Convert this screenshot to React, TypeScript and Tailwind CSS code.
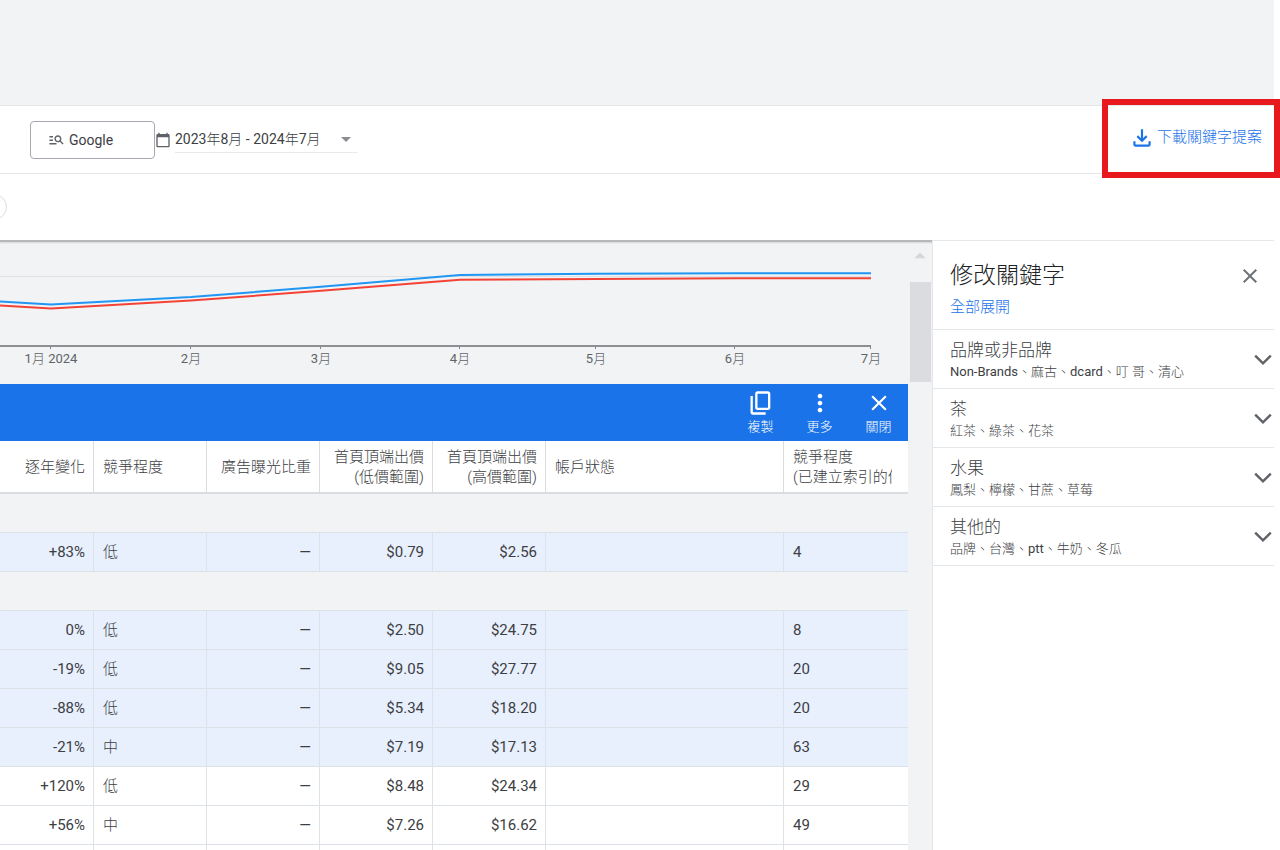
import { clsx } from "clsx";
import {
    MdArrowDropDown,
    MdArrowDropUp,
    MdCalendarToday,
    MdClose,
    MdManageSearch,
    MdMoreVert
} from "react-icons/md";

interface KeywordRow {
    change: string;
    competition: string;
    low: string;
    high: string;
    index: number;
    selected: boolean;
}

const providedRows: KeywordRow[] = [
    { change: "+83%", competition: "低", low: "$0.79", high: "$2.56", index: 4, selected: true }
];

const ideaRows: KeywordRow[] = [
    { change: "0%", competition: "低", low: "$2.50", high: "$24.75", index: 8, selected: true },
    { change: "-19%", competition: "低", low: "$9.05", high: "$27.77", index: 20, selected: true },
    { change: "-88%", competition: "低", low: "$5.34", high: "$18.20", index: 20, selected: true },
    { change: "-21%", competition: "中", low: "$7.19", high: "$17.13", index: 63, selected: true },
    { change: "+120%", competition: "低", low: "$8.48", high: "$24.34", index: 29, selected: false },
    { change: "+56%", competition: "中", low: "$7.26", high: "$16.62", index: 49, selected: false }
];

const groups = [
    { title: "品牌或非品牌", items: "Non-Brands、麻古、dcard、叮 哥、清心" },
    { title: "茶", items: "紅茶、綠茶、花茶" },
    { title: "水果", items: "鳳梨、檸檬、甘蔗、草莓" },
    { title: "其他的", items: "品牌、台灣、ptt、牛奶、冬瓜" }
];

const months = [
    { x: 51, label: "1月 2024" },
    { x: 191, label: "2月" },
    { x: 321, label: "3月" },
    { x: 460, label: "4月" },
    { x: 596, label: "5月" },
    { x: 735, label: "6月" },
    { x: 871, label: "7月" }
];

const DownloadIcon = () => (
    <svg viewBox="0 -960 960 960" className="size-[26px]" fill="currentColor" aria-hidden="true">
        <path d="M480-320 280-520l56-58 104 104v-326h80v326l104-104 56 58-200 200ZM240-160q-33 0-56.5-23.5T160-240v-120h80v120h480v-120h80v120q0 33-23.5 56.5T720-160H240Z" />
    </svg>
);

const CopyIcon = () => (
    <svg viewBox="0 -960 960 960" className="size-7" fill="currentColor" aria-hidden="true">
        <path d="M360-240q-33 0-56.5-23.5T280-320v-480q0-33 23.5-56.5T360-880h360q33 0 56.5 23.5T800-800v480q0 33-23.5 56.5T720-240H360Zm0-80h360v-480H360v480ZM200-80q-33 0-56.5-23.5T120-160v-560h80v560h440v80H200Z" />
    </svg>
);

const ChevronIcon = () => (
    <svg viewBox="0 0 18 12" className="h-3 w-[18px]" fill="none" stroke="#5f6368" strokeWidth="2.4" aria-hidden="true">
        <path d="M1.2 1.6 9 9.4l7.8-7.8" />
    </svg>
);

const FilterBar = () => (
    <div className="relative flex h-[69px] shrink-0 items-center justify-between border-y border-[#e4e6e9] bg-white pl-[30px]">
        <div className="flex items-center">
            <button className="flex h-[38px] w-[125px] items-center gap-1 rounded border border-[#a4a9af] pl-[17px] text-sm text-[#3c4043]">
                <MdManageSearch className="size-[17px] text-[#5f6368]" />
                Google
            </button>
            <button className="flex items-center gap-1 text-sm text-[#3c4043]">
                <MdCalendarToday className="size-4 text-[#5f6368]" />
                <span className="flex h-[26px] w-[183px] items-center justify-between border-b border-[#e8eaed]">
                    2023年8月 - 2024年7月
                    <MdArrowDropDown className="size-6 text-[#8a8d91]" />
                </span>
            </button>
        </div>
        <button className="mb-1 mr-3 flex items-center gap-0.5 text-[15px] font-light text-[#1a73e8]">
            <DownloadIcon />
            下載關鍵字提案
        </button>
        <span className="pointer-events-none absolute -right-1.5 -top-[7px] z-10 h-[79px] w-[178px] border-[6px] border-[#e8191c]" />
    </div>
);

const TrendChart = () => (
    <svg viewBox="0 0 908 142" className="h-[142px] w-full" role="img" aria-label="搜尋量趨勢">
        <path d="M0 34.500H871" stroke="#dfe1e4" />
        <path d="M0 59.500 51 62.500 191 55 321 44.800 460 33 596 31.800 735 31.200 871 31.200" fill="none" stroke="#2196f3" strokeWidth="2" />
        <path d="M0 63.500 51 66.500 191 58.500 321 48.800 460 37.800 596 37 735 36.200 871 36.200" fill="none" stroke="#f44336" strokeWidth="2" />
        <path d="M0 104H871" stroke="#6b6e72" strokeWidth="1.400" />
        {months.map((month) => (
            <g key={month.label}>
                <path d={`M${month.x - 0.5} 104v3`} stroke="#80868b" />
                <text x={month.x} y={121} textAnchor="middle" fill="#5f6368" className="text-[13px]">
                    {month.label}
                </text>
            </g>
        ))}
    </svg>
);

const SelectionBar = () => (
    <div className="flex h-[57px] items-center justify-end bg-[#1a73e8] text-[13px] leading-5 text-white">
        <button className="flex w-[59px] flex-col items-center">
            <CopyIcon />
            複製
        </button>
        <button className="flex w-[59px] flex-col items-center">
            <MdMoreVert className="size-7" />
            更多
        </button>
        <button className="flex w-[59px] flex-col items-center">
            <MdClose className="size-7 p-px" />
            關閉
        </button>
    </div>
);

const Row = ({ row }: { row: KeywordRow }) => (
    <tr
        className={clsx(
            "h-[39px] *:border-r *:border-t *:border-[#dde1e8] *:pl-[9px] *:pr-2 *:last:border-r-0",
            row.selected ? "bg-[#e8effd]" : "bg-white"
        )}
    >
        <td className="text-right">{row.change}</td>
        <td className="font-light">{row.competition}</td>
        <td className="text-right">—</td>
        <td className="text-right">{row.low}</td>
        <td className="text-right">{row.high}</td>
        <td></td>
        <td>{row.index}</td>
    </tr>
);

const KeywordTable = () => (
    <table className="w-full table-fixed border-separate border-spacing-0 text-[15px] leading-5 text-[#3c4043]">
        <colgroup>
            <col className="w-[94px]" />
            <col className="w-[113px]" />
            <col className="w-[113px]" />
            <col className="w-[113px]" />
            <col className="w-[113px]" />
            <col />
            <col className="w-[124px]" />
        </colgroup>
        <thead>
            <tr className="h-[53px] bg-white *:border-b-2 *:border-r *:border-[#dadce0] *:pl-[9px] *:pr-2 *:font-light *:last:border-r-0">
                <th className="text-right">逐年變化</th>
                <th className="text-left">競爭程度</th>
                <th className="text-right">廣告曝光比重</th>
                <th className="text-right">首頁頂端出價<br />(低價範圍)</th>
                <th className="text-right">首頁頂端出價<br />(高價範圍)</th>
                <th className="text-left">帳戶狀態</th>
                <th className="text-left">
                    <div className="mr-2 overflow-hidden whitespace-nowrap">競爭程度<br />(已建立索引的值)</div>
                </th>
            </tr>
        </thead>
        <tbody>
            <tr className="h-[38px]"><td colSpan={7}></td></tr>
            {providedRows.map((row) => <Row key={row.change} row={row} />)}
            <tr className="h-[39px]"><td colSpan={7} className="border-t border-[#dde1e8]"></td></tr>
            {ideaRows.map((row) => <Row key={row.change} row={row} />)}
            <tr className="h-[39px] bg-white *:border-r *:border-t *:border-[#dde1e8] *:last:border-r-0">
                <td></td>
                <td></td>
                <td></td>
                <td></td>
                <td></td>
                <td></td>
                <td></td>
            </tr>
        </tbody>
    </table>
);

const RefinePanel = () => (
    <aside className="w-[342px] shrink-0 border-l border-t border-[#e4e6e9] bg-white">
        <div className="flex items-start justify-between pb-3 pl-[17px] pr-3 pt-[17px]">
            <div>
                <h2 className="text-[23px] font-light leading-9 text-[#202124]">修改關鍵字</h2>
                <a href="#" className="mt-[3px] block text-[15px] font-light leading-5 text-[#1a73e8]">全部展開</a>
            </div>
            <button aria-label="關閉面板" className="mt-[6px]">
                <MdClose className="size-6 text-[#6f7377]" />
            </button>
        </div>
        <ul className="border-b border-[#e4e6e9]">
            {groups.map((group) => (
                <li key={group.title} className="border-t border-[#e4e6e9]">
                    <button className="flex h-[58px] w-full items-center justify-between pl-[17px] pr-0.5 pt-0.5 text-left text-[#3c4043]">
                        <span>
                            <span className="block text-[17px] font-light leading-6">{group.title}</span>
                            <span className="block text-[13px] leading-5">{group.items}</span>
                        </span>
                        <ChevronIcon />
                    </button>
                </li>
            ))}
        </ul>
    </aside>
);

export default function App() {
    return (
        <div
            lang="zh-Hant"
            className="flex h-screen flex-col overflow-hidden bg-white pr-1.5 font-[Roboto,'Noto_Sans_CJK_TC_Light','Noto_Sans_CJK_TC',sans-serif]"
        >
            <div className="h-[105px] shrink-0 bg-[#f1f3f4]" />
            <FilterBar />
            <div className="flex h-[66px] shrink-0 items-center">
                <button aria-label="新增篩選器" className="-ml-[19px] size-[26px] rounded-full border border-[#dadce0]" />
            </div>
            <div className="flex min-h-0 flex-1">
                <main className="flex min-w-0 flex-1 border-t-2 border-[#b4b8b7] bg-[#f1f3f4] shadow-[inset_0_2px_2px_-1px_rgba(0,0,0,0.12)]">
                    <div className="min-w-0 flex-1 overflow-hidden">
                        <TrendChart />
                        <SelectionBar />
                        <KeywordTable />
                    </div>
                    <div className="flex w-6 shrink-0 flex-col items-center">
                        <MdArrowDropUp className="size-7 text-[#d5d7da]" />
                        <div className="mt-3 h-[100px] w-[21px] bg-[#dadce0]" />
                    </div>
                </main>
                <RefinePanel />
            </div>
        </div>
    );
}
